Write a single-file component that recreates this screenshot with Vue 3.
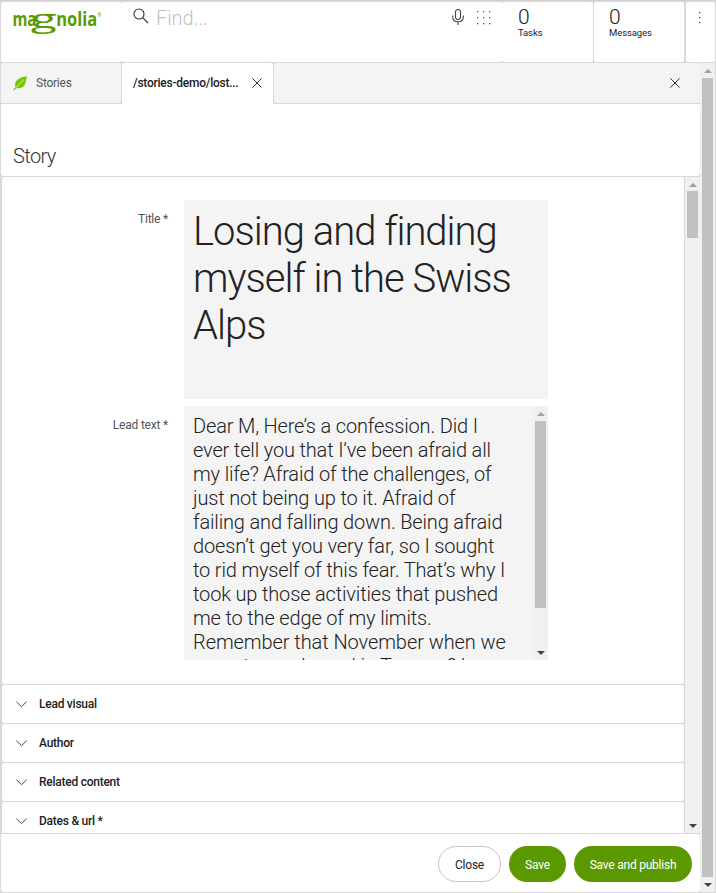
<script setup>
const sections = ['Lead visual', 'Author', 'Related content', 'Dates & url *']
const dots = [1, 7, 13]
</script>

<template>
  <div class="app">
    <header class="top">
      <div class="cell brand">
        <svg class="logo" width="92" height="28" viewBox="0 0 92 28" fill="#5a9a00">
          <text class="word" x="-0.5" y="13.8" textLength="24" lengthAdjust="spacingAndGlyphs">ma</text>
          <text class="gee" transform="translate(17.8 15.6) scale(1.88 1)" x="0" y="0">g</text>
          <text class="word" x="43.300" y="13.8" textLength="41" lengthAdjust="spacingAndGlyphs">nolia</text>
          <text class="reg" x="84.4" y="5">®</text>
        </svg>
      </div>
      <div class="cell find">
        <svg class="lens" width="16" height="16" viewBox="0 0 16 16" fill="none" stroke="#333" stroke-width="1.1">
          <circle cx="6" cy="6" r="5" /><path d="M9.7 9.7L15 15" />
        </svg>
        <span class="placeholder">Find...</span>
        <svg class="mic" width="12" height="16" viewBox="0 0 12 16" fill="none" stroke="#444" stroke-width="1.1">
          <rect x="3.5" y=".5" width="5" height="10" rx="2.5" />
          <path d="M.7 6.5V8C.7 11 3 12.7 6 12.7S11.3 11 11.3 8V6.5M6 12.7V16" />
        </svg>
        <svg class="grid" width="14" height="14" viewBox="0 0 14 14" fill="#555">
          <template v-for="y in dots" :key="y">
            <rect v-for="x in dots" :key="x" :x="x - 1" :y="y - 1" width="1.3" height="1.3" />
          </template>
        </svg>
      </div>
      <div class="cell count tasks"><b>0</b><span>Tasks</span></div>
      <div class="cell count messages"><b>0</b><span>Messages</span></div>
      <div class="cell more">
        <svg width="2" height="13" viewBox="0 0 2 13" fill="#444"><path d="M0 0h1.3v1.3H0zM0 5h1.3v1.3H0zM0 10h1.3v1.3H0z" /></svg>
      </div>
    </header>

    <div class="below">
      <main class="main">
        <nav class="tabs">
          <div class="tab stories">
            <svg width="15" height="15" viewBox="0 0 15 15">
              <path d="M14 .3C8.5.6 3.2 3.4 2.2 7.3c-.4 1.6 0 2.7.4 3.6L.2 13.7l.7.7 2.8-2.3c3.4.8 6.4-.4 8.1-3.5C13 6.400 13.100 3 14 .3z" fill="#78c800" />
              <path d="M2.800 11.700L10.500 4" stroke="#f4f4f4" stroke-width=".8" />
            </svg>
            <span>Stories</span>
          </div>
          <div class="tab active">
            <span>/stories-demo/lost...</span>
            <svg class="x" width="10" height="10" viewBox="0 0 10 10"><path d="M.4.4L9.600 9.600M9.600.4L.4 9.600" stroke="#333" /></svg>
          </div>
          <div class="tab rest">
            <svg class="x" width="10" height="10" viewBox="0 0 10 10"><path d="M.4.4L9.600 9.600M9.600.4L.4 9.600" stroke="#333" /></svg>
          </div>
        </nav>

        <h1 class="heading">Story</h1>

        <div class="form">
          <div class="panels">
            <section class="fields">
              <div class="row">
                <label>Title *</label>
                <div class="box title">Losing and finding<br>myself in the Swiss<br>Alps</div>
              </div>
              <div class="row">
                <label>Lead text *</label>
                <div class="box lead">
                  <p>Dear M, Here’s a confession. Did I<br>ever tell you that I’ve been afraid all<br>my life? Afraid of the challenges, of<br>just not being up to it. Afraid of<br>failing and falling down. Being afraid<br>doesn’t get you very far, so I sought<br>to rid myself of this fear. That’s why I<br>took up those activities that pushed<br>me to the edge of my limits.<br><span class="wide">Remember that November when we</span><br>we sat snowbound in Tromsø? I</p>
                  <div class="bar"><i class="up"></i><i class="thumb lead-thumb"></i><i class="down"></i></div>
                </div>
              </div>
            </section>
            <section v-for="s in sections" :key="s" class="fold">
              <svg width="11" height="7" viewBox="0 0 11 7" fill="none" stroke="#444"><path d="M.4.7L5.500 5.700L10.600.7" /></svg>
              <span>{{ s }}</span>
            </section>
          </div>
          <div class="bar"><i class="up"></i><i class="thumb form-thumb"></i><i class="down"></i></div>
        </div>

        <footer class="actions">
          <button class="close">Close</button>
          <button class="save">Save</button>
          <button class="publish">Save and publish</button>
        </footer>
      </main>
      <div class="bar page-bar"><i class="up"></i><i class="thumb page-thumb"></i><i class="down"></i></div>
    </div>
  </div>
</template>

<style>
body { margin: 0; overflow: hidden; }
</style>

<style scoped>
* { box-sizing: border-box; }
.app { width: 716px; height: 893px; padding: 1px; background: #d9d9d9; font-family: Roboto, sans-serif; color: #222; display: flex; flex-direction: column; gap: 1px; border-top: 1px solid #d0d0d0; }
.top { display: flex; height: 60px; flex: none; }
.cell { background: #fff; border-radius: 2px; display: flex; align-items: flex-start; }
.brand { width: 121px; padding: 10px 0 0 12px; }
.logo { display: block; overflow: visible; }
.word { font: 700 20px "Open Sans", sans-serif; }
.gee { font: 400 25.500px "Open Sans", sans-serif; }
.reg { font: 700 5px Roboto, sans-serif; }
.find { width: 380px; padding: 6px 11px 0 11px; }
.placeholder { margin-left: 7px; margin-top: -2px; font-size: 20px; line-height: 24px; font-weight: 300; letter-spacing: -.1px; color: #c0c0c0; flex: 1; }
.mic { margin-top: 1px; }
.grid { margin: 3px 0 0 13px; }
.count { width: 91px; padding: 4px 0 0 16px; flex-direction: column; }
.count b { font-size: 21px; line-height: 22px; font-weight: 300; }
.count span { font-size: 9.500px; line-height: 11px; margin-top: -1px; letter-spacing: -.1px; color: #222; }
.messages { width: 90px; margin-left: 1px; padding-left: 15px; }
.more { width: 29px; margin-left: 2px; padding: 10px 0 0 13px; }
.below { display: flex; flex: 1; min-height: 0; }
.main { width: 699px; display: flex; flex-direction: column; gap: 1px; }
.tabs { display: flex; height: 40px; flex: none; }
.tab { background: #f4f4f4; display: flex; align-items: center; border-radius: 2px; }
.stories { width: 120px; padding-left: 12px; gap: 8px; font-size: 12px; letter-spacing: -.25px; color: #555; margin-right: 1px; }
.active { width: 151px; background: #fff; font-size: 12px; font-weight: 500; letter-spacing: -.25px; justify-content: space-between; padding: 0 11px 1px 11px; margin-right: 1px; margin-bottom: -1px; border-radius: 2px 2px 0 0; }
.rest { flex: 1; justify-content: flex-end; padding-right: 20px; }
.heading { margin: 0; background: #fff; height: 72px; flex: none; padding: 40px 0 0 12px; font-size: 20px; line-height: 24px; font-weight: 300; letter-spacing: -.6px; color: #333; border-radius: 0 2px 3px 3px; }
.form { display: flex; height: 656px; flex: none; padding-left: 1px; overflow: hidden; }
.panels { width: 683px; display: flex; flex-direction: column; gap: 1px; padding-right: 1px; }
.fields { height: 507px; flex: none; background: #fff; padding-top: 23px; border-radius: 2px; display: flex; flex-direction: column; gap: 7px; }
.row { display: flex; }
.row label { width: 166px; margin-right: 16px; padding-top: 12px; font-size: 12px; line-height: 14px; letter-spacing: -.2px; text-align: right; color: #555; }
.box { width: 364px; background: #f4f4f4; font-weight: 300; }
.title { height: 199px; padding: 8px 9px; font-size: 40px; line-height: 47px; letter-spacing: -1px; white-space: nowrap; }
.lead { height: 254px; display: flex; overflow: hidden; }
.lead p { margin: 0; padding: 8px 0 0 9px; flex: 1; font-size: 20px; line-height: 24px; letter-spacing: -.16px; white-space: nowrap; }
.wide { letter-spacing: -.07px; }
.fold { height: 38px; flex: none; background: #fff; border-radius: 2px; display: flex; align-items: center; padding-left: 14px; gap: 12px; font-size: 12px; font-weight: 500; letter-spacing: -.25px; }
.fold svg { margin-top: 1px; }
.bar { width: 15px; flex: none; background: #f0f0f0; display: flex; flex-direction: column; align-items: center; padding: 6px 0 5px; }
.up, .down { width: 0; height: 0; border: 0 solid transparent; border-left-width: 4px; border-right-width: 4px; border-bottom: 4px solid #a0a0a0; }
.down { border-bottom: 0; border-top: 4px solid #444; margin-top: auto; }
.thumb { width: 11px; background: #c0c0c0; margin-top: 5px; }
.lead-thumb { height: 187px; }
.form-thumb { height: 47px; margin-top: 4px; }
.page-thumb { height: 799px; }
.actions { height: 58px; flex: none; background: #fff; display: flex; justify-content: flex-end; gap: 8px; padding: 12px 8px 0; border-radius: 0 3px 3px 3px; }
button { height: 36px; border: 0; border-radius: 18px; background: #5a9a00; color: #fff; font: 400 12px Roboto, sans-serif; letter-spacing: -.22px; padding: 2px 0 0; }
.close { width: 63px; background: #fff; color: #222; border: 1px solid #c6c6c6; }
.save { width: 57px; }
.publish { width: 118px; }
</style>
